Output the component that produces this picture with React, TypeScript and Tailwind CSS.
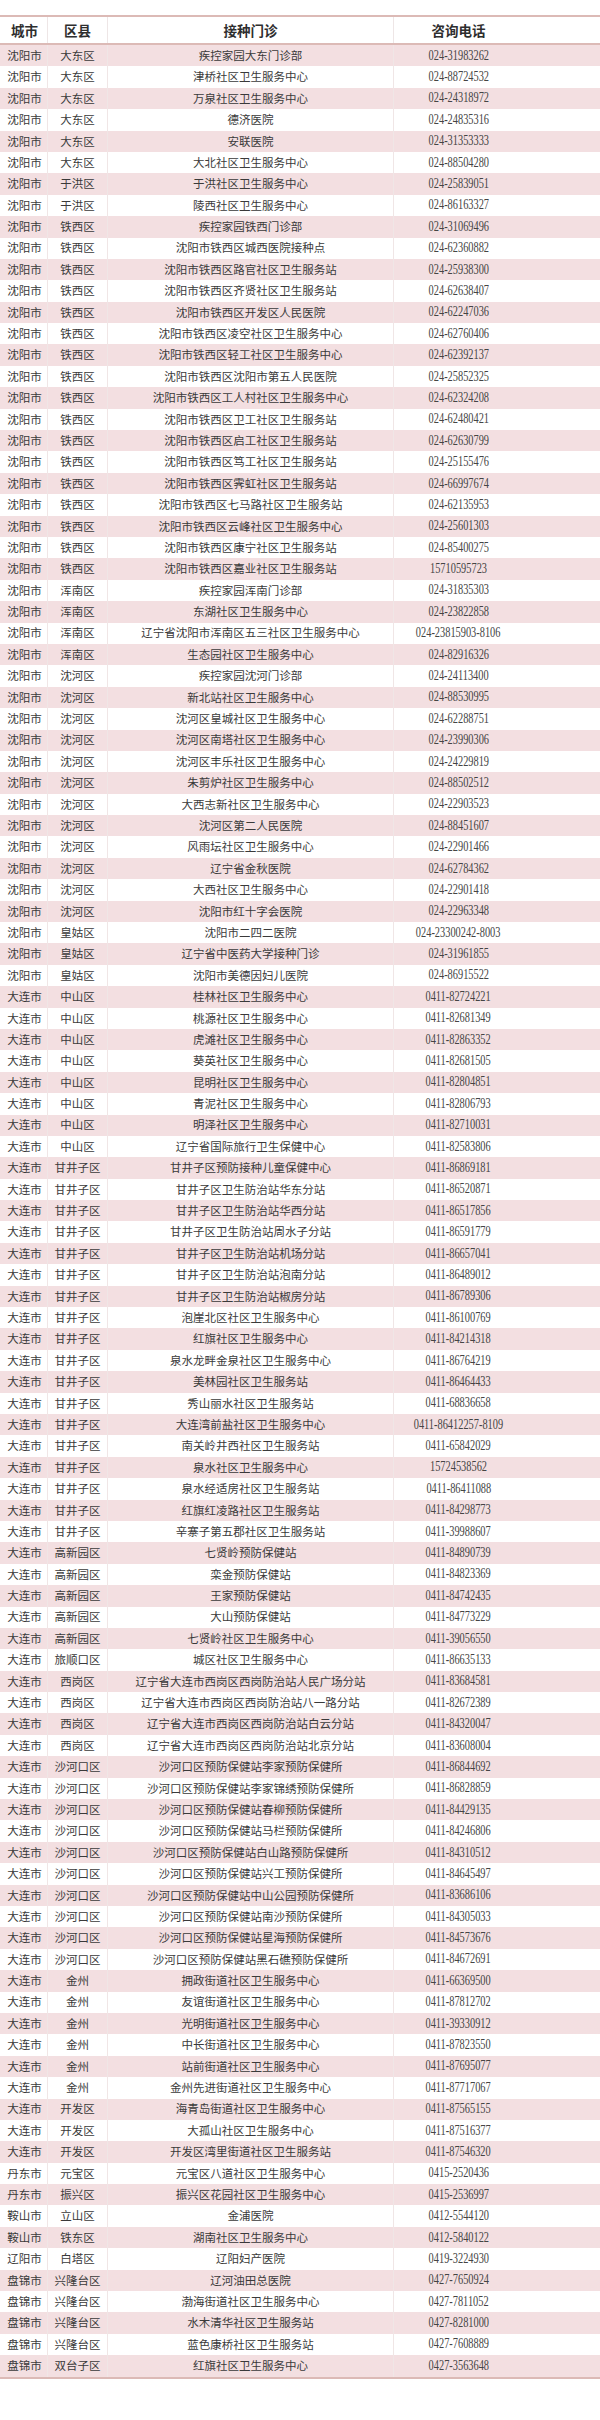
const rows: [string, string, string, string][] = [
  ["沈阳市", "大东区", "疾控家园大东门诊部", "024-31983262"],
  ["沈阳市", "大东区", "津桥社区卫生服务中心", "024-88724532"],
  ["沈阳市", "大东区", "万泉社区卫生服务中心", "024-24318972"],
  ["沈阳市", "大东区", "德济医院", "024-24835316"],
  ["沈阳市", "大东区", "安联医院", "024-31353333"],
  ["沈阳市", "大东区", "大北社区卫生服务中心", "024-88504280"],
  ["沈阳市", "于洪区", "于洪社区卫生服务中心", "024-25839051"],
  ["沈阳市", "于洪区", "陵西社区卫生服务中心", "024-86163327"],
  ["沈阳市", "铁西区", "疾控家园铁西门诊部", "024-31069496"],
  ["沈阳市", "铁西区", "沈阳市铁西区城西医院接种点", "024-62360882"],
  ["沈阳市", "铁西区", "沈阳市铁西区路官社区卫生服务站", "024-25938300"],
  ["沈阳市", "铁西区", "沈阳市铁西区齐贤社区卫生服务站", "024-62638407"],
  ["沈阳市", "铁西区", "沈阳市铁西区开发区人民医院", "024-62247036"],
  ["沈阳市", "铁西区", "沈阳市铁西区凌空社区卫生服务中心", "024-62760406"],
  ["沈阳市", "铁西区", "沈阳市铁西区轻工社区卫生服务中心", "024-62392137"],
  ["沈阳市", "铁西区", "沈阳市铁西区沈阳市第五人民医院", "024-25852325"],
  ["沈阳市", "铁西区", "沈阳市铁西区工人村社区卫生服务中心", "024-62324208"],
  ["沈阳市", "铁西区", "沈阳市铁西区卫工社区卫生服务站", "024-62480421"],
  ["沈阳市", "铁西区", "沈阳市铁西区启工社区卫生服务站", "024-62630799"],
  ["沈阳市", "铁西区", "沈阳市铁西区笃工社区卫生服务站", "024-25155476"],
  ["沈阳市", "铁西区", "沈阳市铁西区霁虹社区卫生服务站", "024-66997674"],
  ["沈阳市", "铁西区", "沈阳市铁西区七马路社区卫生服务站", "024-62135953"],
  ["沈阳市", "铁西区", "沈阳市铁西区云峰社区卫生服务中心", "024-25601303"],
  ["沈阳市", "铁西区", "沈阳市铁西区康宁社区卫生服务站", "024-85400275"],
  ["沈阳市", "铁西区", "沈阳市铁西区嘉业社区卫生服务站", "15710595723"],
  ["沈阳市", "浑南区", "疾控家园浑南门诊部", "024-31835303"],
  ["沈阳市", "浑南区", "东湖社区卫生服务中心", "024-23822858"],
  ["沈阳市", "浑南区", "辽宁省沈阳市浑南区五三社区卫生服务中心", "024-23815903-8106"],
  ["沈阳市", "浑南区", "生态园社区卫生服务中心", "024-82916326"],
  ["沈阳市", "沈河区", "疾控家园沈河门诊部", "024-24113400"],
  ["沈阳市", "沈河区", "新北站社区卫生服务中心", "024-88530995"],
  ["沈阳市", "沈河区", "沈河区皇城社区卫生服务中心", "024-62288751"],
  ["沈阳市", "沈河区", "沈河区南塔社区卫生服务中心", "024-23990306"],
  ["沈阳市", "沈河区", "沈河区丰乐社区卫生服务中心", "024-24229819"],
  ["沈阳市", "沈河区", "朱剪炉社区卫生服务中心", "024-88502512"],
  ["沈阳市", "沈河区", "大西志新社区卫生服务中心", "024-22903523"],
  ["沈阳市", "沈河区", "沈河区第二人民医院", "024-88451607"],
  ["沈阳市", "沈河区", "风雨坛社区卫生服务中心", "024-22901466"],
  ["沈阳市", "沈河区", "辽宁省金秋医院", "024-62784362"],
  ["沈阳市", "沈河区", "大西社区卫生服务中心", "024-22901418"],
  ["沈阳市", "沈河区", "沈阳市红十字会医院", "024-22963348"],
  ["沈阳市", "皇姑区", "沈阳市二四二医院", "024-23300242-8003"],
  ["沈阳市", "皇姑区", "辽宁省中医药大学接种门诊", "024-31961855"],
  ["沈阳市", "皇姑区", "沈阳市美德因妇儿医院", "024-86915522"],
  ["大连市", "中山区", "桂林社区卫生服务中心", "0411-82724221"],
  ["大连市", "中山区", "桃源社区卫生服务中心", "0411-82681349"],
  ["大连市", "中山区", "虎滩社区卫生服务中心", "0411-82863352"],
  ["大连市", "中山区", "葵英社区卫生服务中心", "0411-82681505"],
  ["大连市", "中山区", "昆明社区卫生服务中心", "0411-82804851"],
  ["大连市", "中山区", "青泥社区卫生服务中心", "0411-82806793"],
  ["大连市", "中山区", "明泽社区卫生服务中心", "0411-82710031"],
  ["大连市", "中山区", "辽宁省国际旅行卫生保健中心", "0411-82583806"],
  ["大连市", "甘井子区", "甘井子区预防接种儿童保健中心", "0411-86869181"],
  ["大连市", "甘井子区", "甘井子区卫生防治站华东分站", "0411-86520871"],
  ["大连市", "甘井子区", "甘井子区卫生防治站华西分站", "0411-86517856"],
  ["大连市", "甘井子区", "甘井子区卫生防治站周水子分站", "0411-86591779"],
  ["大连市", "甘井子区", "甘井子区卫生防治站机场分站", "0411-86657041"],
  ["大连市", "甘井子区", "甘井子区卫生防治站泡南分站", "0411-86489012"],
  ["大连市", "甘井子区", "甘井子区卫生防治站椒房分站", "0411-86789306"],
  ["大连市", "甘井子区", "泡崖北区社区卫生服务中心", "0411-86100769"],
  ["大连市", "甘井子区", "红旗社区卫生服务中心", "0411-84214318"],
  ["大连市", "甘井子区", "泉水龙畔金泉社区卫生服务中心", "0411-86764219"],
  ["大连市", "甘井子区", "美林园社区卫生服务站", "0411-86464433"],
  ["大连市", "甘井子区", "秀山丽水社区卫生服务站", "0411-68836658"],
  ["大连市", "甘井子区", "大连湾前盐社区卫生服务中心", "0411-86412257-8109"],
  ["大连市", "甘井子区", "南关岭井西社区卫生服务站", "0411-65842029"],
  ["大连市", "甘井子区", "泉水社区卫生服务中心", "15724538562"],
  ["大连市", "甘井子区", "泉水经适房社区卫生服务站", "0411-86411088"],
  ["大连市", "甘井子区", "红旗红凌路社区卫生服务站", "0411-84298773"],
  ["大连市", "甘井子区", "辛寨子第五郡社区卫生服务站", "0411-39988607"],
  ["大连市", "高新园区", "七贤岭预防保健站", "0411-84890739"],
  ["大连市", "高新园区", "栾金预防保健站", "0411-84823369"],
  ["大连市", "高新园区", "王家预防保健站", "0411-84742435"],
  ["大连市", "高新园区", "大山预防保健站", "0411-84773229"],
  ["大连市", "高新园区", "七贤岭社区卫生服务中心", "0411-39056550"],
  ["大连市", "旅顺口区", "城区社区卫生服务中心", "0411-86635133"],
  ["大连市", "西岗区", "辽宁省大连市西岗区西岗防治站人民广场分站", "0411-83684581"],
  ["大连市", "西岗区", "辽宁省大连市西岗区西岗防治站八一路分站", "0411-82672389"],
  ["大连市", "西岗区", "辽宁省大连市西岗区西岗防治站白云分站", "0411-84320047"],
  ["大连市", "西岗区", "辽宁省大连市西岗区西岗防治站北京分站", "0411-83608004"],
  ["大连市", "沙河口区", "沙河口区预防保健站李家预防保健所", "0411-86844692"],
  ["大连市", "沙河口区", "沙河口区预防保健站李家锦绣预防保健所", "0411-86828859"],
  ["大连市", "沙河口区", "沙河口区预防保健站春柳预防保健所", "0411-84429135"],
  ["大连市", "沙河口区", "沙河口区预防保健站马栏预防保健所", "0411-84246806"],
  ["大连市", "沙河口区", "沙河口区预防保健站白山路预防保健所", "0411-84310512"],
  ["大连市", "沙河口区", "沙河口区预防保健站兴工预防保健所", "0411-84645497"],
  ["大连市", "沙河口区", "沙河口区预防保健站中山公园预防保健所", "0411-83686106"],
  ["大连市", "沙河口区", "沙河口区预防保健站南沙预防保健所", "0411-84305033"],
  ["大连市", "沙河口区", "沙河口区预防保健站星海预防保健所", "0411-84573676"],
  ["大连市", "沙河口区", "沙河口区预防保健站黑石礁预防保健所", "0411-84672691"],
  ["大连市", "金州", "拥政街道社区卫生服务中心", "0411-66369500"],
  ["大连市", "金州", "友谊街道社区卫生服务中心", "0411-87812702"],
  ["大连市", "金州", "光明街道社区卫生服务中心", "0411-39330912"],
  ["大连市", "金州", "中长街道社区卫生服务中心", "0411-87823550"],
  ["大连市", "金州", "站前街道社区卫生服务中心", "0411-87695077"],
  ["大连市", "金州", "金州先进街道社区卫生服务中心", "0411-87717067"],
  ["大连市", "开发区", "海青岛街道社区卫生服务中心", "0411-87565155"],
  ["大连市", "开发区", "大孤山社区卫生服务中心", "0411-87516377"],
  ["大连市", "开发区", "开发区湾里街道社区卫生服务站", "0411-87546320"],
  ["丹东市", "元宝区", "元宝区八道社区卫生服务中心", "0415-2520436"],
  ["丹东市", "振兴区", "振兴区花园社区卫生服务中心", "0415-2536997"],
  ["鞍山市", "立山区", "金浦医院", "0412-5544120"],
  ["鞍山市", "铁东区", "湖南社区卫生服务中心", "0412-5840122"],
  ["辽阳市", "白塔区", "辽阳妇产医院", "0419-3224930"],
  ["盘锦市", "兴隆台区", "辽河油田总医院", "0427-7650924"],
  ["盘锦市", "兴隆台区", "渤海街道社区卫生服务中心", "0427-7811052"],
  ["盘锦市", "兴隆台区", "水木清华社区卫生服务站", "0427-8281000"],
  ["盘锦市", "兴隆台区", "蓝色康桥社区卫生服务站", "0427-7608889"],
  ["盘锦市", "双台子区", "红旗社区卫生服务中心", "0427-3563648"],
];

export default function App() {
  return (
    <div className="w-[600px] h-[2420px] bg-white pt-[15px] font-['Noto_Sans_CJK_SC',sans-serif] text-[#3a3a3a]">
      <div className="border-t-2 border-b-2 border-[#dcbab6]">
        {/* header */}
        <div className="grid grid-cols-[47px_60px_286px_1fr] h-[28px] items-center border-b-2 border-[#dcbab6] text-[13.5px] font-bold text-[#2e2e2e]">
          <div className="text-center pl-[2px]">城市</div>
          <div className="text-center h-full flex items-center justify-center border-l border-[#eee6e6]">区县</div>
          <div className="text-center h-full flex items-center justify-center border-l border-[#eee6e6]">接种门诊</div>
          <div className="text-center h-full flex items-center justify-center border-l border-[#eee6e6] pr-[77px]">咨询电话</div>
        </div>
        {rows.map(([city, district, clinic, phone], i) => (
          <div
            key={i}
            className={`grid grid-cols-[47px_60px_286px_1fr] h-[21.4px] text-[11.5px] leading-none ${
              i % 2 === 0 ? "bg-[#f3dfe1]" : "bg-white"
            }`}
          >
            <div className="flex items-center justify-center pl-[2px]">{city}</div>
            <div className="flex items-center justify-center border-l border-[#f0e6e6]">{district}</div>
            <div className="flex items-center justify-center border-l border-[#f0e6e6]">{clinic}</div>
            <div className="flex items-center justify-center border-l border-[#f0e6e6] pr-[77px]">
              <span className="inline-block font-['Liberation_Serif',serif] text-[14px] text-[#444] scale-x-[0.74] whitespace-nowrap">
                {phone}
              </span>
            </div>
          </div>
        ))}
      </div>
    </div>
  );
}
